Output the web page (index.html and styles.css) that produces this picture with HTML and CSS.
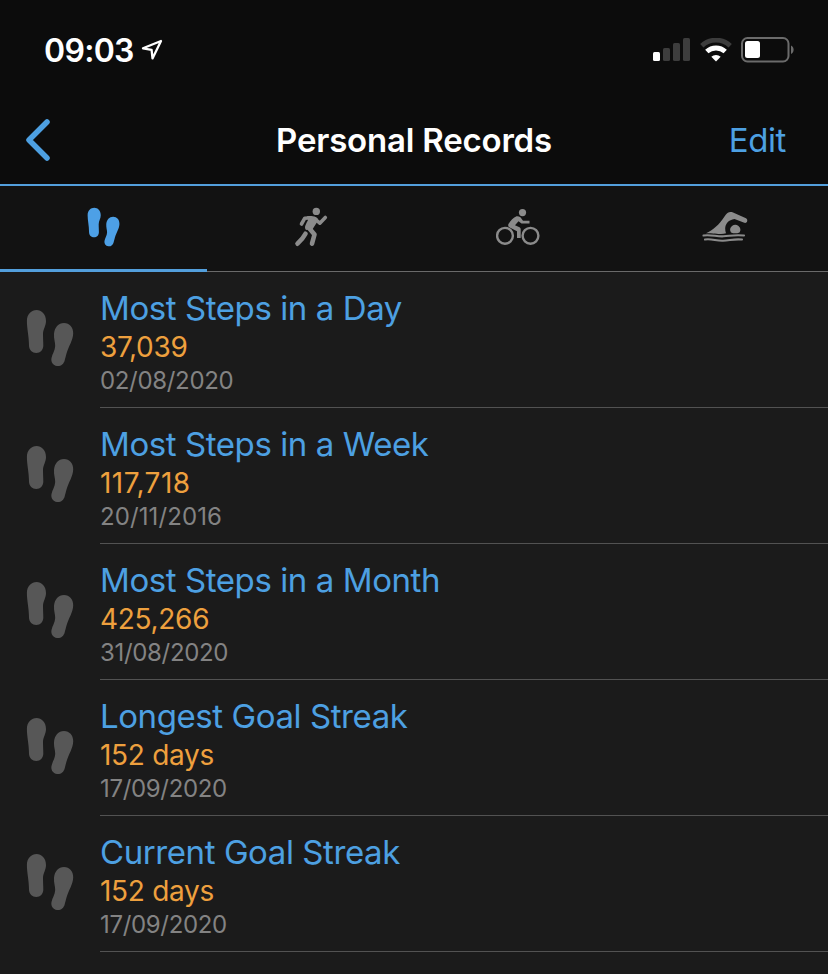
FILE: index.html
```
<!DOCTYPE html>
<html lang="en">
<head>
    <meta charset="UTF-8">
    <meta name="viewport" content="width=device-width, initial-scale=1.0">
    <title>Personal Records</title>
    <link rel="stylesheet" href="styles.css">
</head>
<body>
    <svg class="sprite" aria-hidden="true">
        <symbol id="steps" viewBox="0 0 48 58">
            <path d="M10.600 1C15.500 1 20 5 20 12c0 5-3 8.500-3 13 0 4 .3 7 .3 11.500 0 4.500-3 7.500-7 7.500s-7.300-3-7.300-7.500C3 27 .9 20 .9 12 .9 5 5.500 1 10.600 1z"/>
            <path d="M38 14c5.500 0 9.400 4.500 9.200 10.500-.3 7-4.300 12-6.700 20-.8 3-1.200 4.500-1.700 6.500-1 4.300-4.300 6.500-7.800 6-4-.5-6.300-4-5.500-8 .8-4 3.500-7.500 3.700-12 .1-4-1.500-7-1.200-12 .4-6.500 4.500-11 10-11z"/>
        </symbol>
    </svg>

    <div class="status-bar">
        <span class="time">09:03</span>
        <svg class="location" viewBox="0 0 22 22">
            <path d="M20 2 2 9.300l8.600 1.600.9 8.500z"/>
        </svg>
        <div class="status-icons">
            <svg class="signal" viewBox="0 0 38 24">
                <rect class="on" x="0" y="14" width="7" height="9" rx="1.500"/>
                <rect x="10" y="10" width="7" height="13" rx="1.500"/>
                <rect x="20" y="5" width="7" height="18" rx="1.500"/>
                <rect x="30" y="0" width="7" height="23" rx="1.500"/>
            </svg>
            <svg class="wifi" viewBox="0 0 32 24">
                <path class="arc dim" d="M1.800 7.800a20.500 20.500 0 0 1 28.400 0"/>
                <path class="arc" d="M6.800 13.600a13.500 13.500 0 0 1 18.400 0"/>
                <path class="dot" d="M16 23.500l-4.700-4.700a6.800 6.800 0 0 1 9.400 0z"/>
            </svg>
            <svg class="battery" viewBox="0 0 54 26">
                <rect class="shell" x="1" y="1" width="46.500" height="23.500" rx="5.500"/>
                <rect class="level" x="4" y="4" width="15" height="17" rx="2.500"/>
                <path class="tip" d="M50 8.500c3.500 1.200 3.500 7.300 0 8.500z"/>
            </svg>
        </div>
    </div>

    <div class="nav-bar">
        <button class="back" aria-label="Back">
            <svg viewBox="0 0 26 44"><path d="M22 4 4 22l18 18"/></svg>
        </button>
        <h1>Personal Records</h1>
        <button class="edit">Edit</button>
    </div>

    <div class="tabs">
        <div class="tab active">
            <svg class="tab-steps"><use href="#steps"/></svg>
        </div>
        <div class="tab">
            <svg class="tab-run" viewBox="0 0 34 40">
                <circle class="fill" cx="22.300" cy="4.400" r="3.700"/>
                <path class="limb" d="M17 10.800 10.800 11.200 7.500 17"/>
                <path class="limb" d="M21 12 25.800 16.200 31.300 10.500"/>
                <path class="fill" d="M13 9.300c4-.8 8-.5 10.500 2 .8 1.400 0 3-1 4.700L18.700 22l-6.700 1c-2.500-3 .5-6.500 2-10z"/>
                <path class="leg" d="M14.200 20 20.500 27.500 18 36.700"/>
                <path class="leg" d="M11.500 26.700Q9 31.500 3.500 36.700"/>
            </svg>
        </div>
        <div class="tab">
            <svg class="tab-bike" viewBox="0 0 44 38">
                <circle class="wheel" cx="9" cy="26.800" r="7.900"/>
                <circle class="wheel" cx="34.500" cy="26.800" r="7.900"/>
                <circle class="fill" cx="26.500" cy="3.600" r="3.600"/>
                <path class="fill" d="M12.500 15c2-3.500 5-6.500 8-7.700 2-.5 4.500.7 5 2.500l1.500 2h6.500v2.800h-8l-3-2.300-3.500 4 4.500 2c1 .5 1.200 1.200 1.200 2.300v8.400h-3.700v-6.700l-6.800-3.500c-1.700-.8-2.500-2.300-1.700-3.800z"/>
            </svg>
        </div>
        <div class="tab">
            <svg class="tab-swim" viewBox="0 0 46 32">
                <path class="fill" d="M4 22.300C11 19 17 14 22.500 5.500 25 1.500 27.500.3 30.500 1.300L44 7.300c2.500 1.500 1 5.300-1.700 4.500L32.500 8C25 9 21.500 15 24 22.300c-4 1.500-8.500.3-20 0z"/>
                <path class="fill" d="M29 21.500a5 5 0 1 1 8.500 0q-4.300 1.700-8.500 0z"/>
                <path class="wave" d="M1.500 24.500c8-1 13 1.200 20 .8s11-1.800 20.500-.8"/>
                <path class="wave" d="M3 28.500c7-1 11 1.500 18 1.200s11-2 19-1.200"/>
            </svg>
        </div>
    </div>

    <ul class="records">
        <li class="record">
            <svg class="record-icon"><use href="#steps"/></svg>
            <div class="record-body">
                <div class="record-name">Most Steps in a Day</div>
                <div class="record-value">37,039</div>
                <div class="record-date">02/08/2020</div>
            </div>
        </li>
        <li class="record">
            <svg class="record-icon"><use href="#steps"/></svg>
            <div class="record-body">
                <div class="record-name">Most Steps in a Week</div>
                <div class="record-value wide">117,718</div>
                <div class="record-date wide">20/11/2016</div>
            </div>
        </li>
        <li class="record">
            <svg class="record-icon"><use href="#steps"/></svg>
            <div class="record-body">
                <div class="record-name">Most Steps in a Month</div>
                <div class="record-value">425,266</div>
                <div class="record-date">31/08/2020</div>
            </div>
        </li>
        <li class="record">
            <svg class="record-icon"><use href="#steps"/></svg>
            <div class="record-body">
                <div class="record-name">Longest Goal Streak</div>
                <div class="record-value">152 days</div>
                <div class="record-date">17/09/2020</div>
            </div>
        </li>
        <li class="record">
            <svg class="record-icon"><use href="#steps"/></svg>
            <div class="record-body">
                <div class="record-name">Current Goal Streak</div>
                <div class="record-value">152 days</div>
                <div class="record-date">17/09/2020</div>
            </div>
        </li>
    </ul>
</body>
</html>
```

FILE: styles.css
```
* {
    box-sizing: border-box;
}
body {
    margin: 0;
    height: 974px;
    overflow: hidden;
    font-family: Inter, "Liberation Sans", sans-serif;
    background-color: #1b1b1b;
    color: #fff;
}
svg {
    display: block;
    flex: none;
}
button {
    padding: 0;
    border: none;
    background: none;
    font-family: inherit;
    cursor: pointer;
}
.sprite {
    display: none;
}

/* status bar */
.status-bar {
    display: flex;
    align-items: center;
    height: 100px;
    padding: 0 33px 0 44px;
    background-color: #0c0c0c;
}
.time {
    width: 97px;
    padding-top: 1px;
    font-size: 32px;
    font-weight: 600;
    line-height: 40px;
    letter-spacing: -0.7px;
}
.location {
    width: 22px;
    height: 22px;
    fill: none;
    stroke: #fff;
    stroke-width: 2.3;
    stroke-linejoin: round;
}
.status-icons {
    display: flex;
    align-items: center;
    margin-left: auto;
}
.signal {
    width: 38px;
    height: 24px;
    margin-right: 9px;
    fill: #3d3d3d;
}
.signal .on {
    fill: #fff;
}
.wifi {
    width: 32px;
    height: 24px;
    margin-right: 9px;
}
.wifi .arc {
    fill: none;
    stroke: #fff;
    stroke-width: 4.8;
}
.wifi .dim {
    stroke: #3d3d3d;
}
.wifi .dot {
    fill: #fff;
}
.battery {
    width: 54px;
    height: 26px;
}
.shell {
    fill: none;
    stroke: #6b6b6b;
    stroke-width: 2;
}
.level {
    fill: #fff;
}
.tip {
    fill: #6b6b6b;
}

/* navigation */
.nav-bar {
    display: grid;
    grid-template-columns: 1fr auto 1fr;
    align-items: center;
    height: 86px;
    padding: 0 42px 4px 25px;
    background-color: #0c0c0c;
    border-bottom: 2px solid #539fdc;
}
.back svg {
    width: 26px;
    height: 44px;
    fill: none;
    stroke: #4da0e2;
    stroke-width: 5.5;
    stroke-linecap: round;
    stroke-linejoin: round;
}
.nav-bar h1 {
    margin: 0 0 0 17px;
    font-size: 33px;
    font-weight: 600;
    line-height: 40px;
    letter-spacing: -0.2px;
}
.edit {
    justify-self: end;
    font-size: 33px;
    line-height: 40px;
    letter-spacing: -0.4px;
    color: #4da0e2;
}

/* activity tabs */
.tabs {
    display: grid;
    grid-template-columns: repeat(4, 1fr);
    height: 86px;
    background-color: #121212;
    border-bottom: 1px solid #6a6a6a;
}
.tab {
    display: flex;
    justify-content: center;
    padding-top: 21px;
    height: 86px;
    color: #8b8b8b;
}
.tab.active {
    padding-right: 1px;
    color: #4da0e6;
    border-bottom: 3px solid #539fdc;
}
.tab svg {
    fill: none;
    stroke: none;
}
.tab .tab-steps {
    width: 33px;
    height: 40px;
    fill: currentColor;
}
.tab .fill {
    fill: currentColor;
}
.tab-run {
    width: 34px;
    height: 40px;
}
.limb {
    stroke: currentColor;
    stroke-width: 3.6;
    stroke-linecap: round;
    stroke-linejoin: round;
}
.leg {
    stroke: currentColor;
    stroke-width: 4.6;
    stroke-linecap: round;
    stroke-linejoin: round;
}
.tab-bike {
    width: 44px;
    height: 38px;
    margin-top: 2px;
}
.wheel {
    stroke: currentColor;
    stroke-width: 2.4;
}
.tab-swim {
    width: 46px;
    height: 32px;
    margin-top: 4px;
}
.tab-swim .wave {
    stroke: currentColor;
    stroke-width: 2.1;
    stroke-linecap: round;
}

/* records */
.records {
    margin: 0;
    padding: 0;
    list-style: none;
}
.record {
    display: flex;
    height: 136px;
    padding-left: 26px;
}
.record-icon {
    width: 48px;
    height: 58px;
    margin: 37px 26px 0 0;
    fill: #575757;
}
.record-body {
    flex: 1;
    padding-top: 16px;
    border-bottom: 1px solid #525252;
}
.record-name {
    font-size: 33px;
    line-height: 40px;
    letter-spacing: -0.42px;
    color: #4da0e2;
}
.record-value {
    padding-top: 1px;
    font-size: 28px;
    line-height: 36px;
    letter-spacing: -0.3px;
    color: #eea03e;
}
.record-date {
    font-size: 24px;
    line-height: 32px;
    letter-spacing: -0.33px;
    color: #838383;
}
.record-value.wide {
    letter-spacing: 0.45px;
}
.record-date.wide {
    letter-spacing: 0.1px;
}
```
